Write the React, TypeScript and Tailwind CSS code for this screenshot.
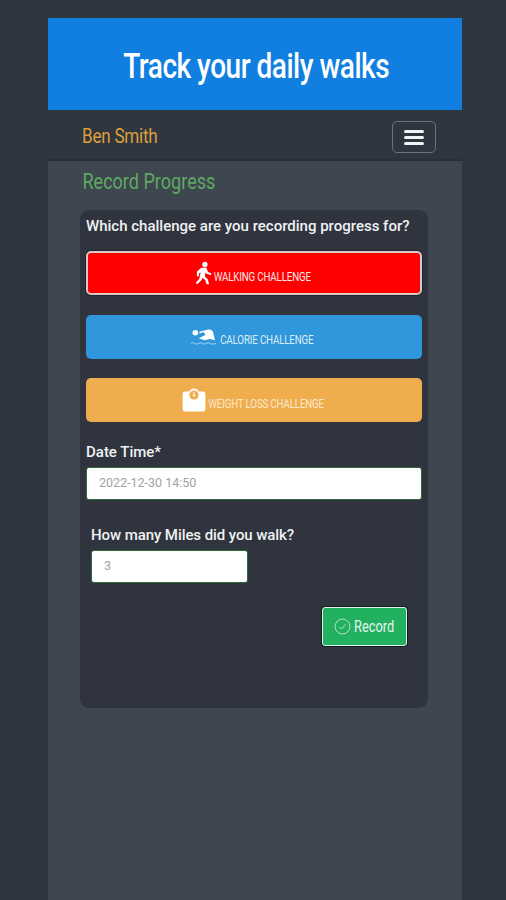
import React from "react";

function WalkIcon() {
  return (
    <svg viewBox="0 0 18 24" className="w-[17px] h-[24px]" fill="white">
      <circle cx="10.500" cy="3" r="2.800" />
      <path d="M6.500 6.500h5.500l1.800 4.400 3.700 1.500-.8 2-4.900-2-.5-1.200-1 4.200 3.200 3.200 1.500 5.400h-2.700l-1.300-4.300-3.200-2.700-.8 2.400L2.400 24 .8 22.300l3.800-4.300L6 11.400l-1.700.9v3.200H2V10.800z" />
    </svg>
  );
}

function SwimIcon() {
  return (
    <svg viewBox="0 0 26 20" className="w-[25px] h-[20px]" fill="white">
      <circle cx="4.500" cy="5.500" r="2.900" />
      <path d="M8.500 4.500 18 2.200Q22 1.800 23 5l2 8.500-5-1.500-6 1.500-6-2.200L15 8l-1.800-3.200-4 1.500z" />
      <path d="M0 16.200c1.300-.9 2.700-.9 4 0s2.700.9 4 0 2.700-.9 4 0 2.700.9 4 0 2.700-.9 4 0 2.700.9 6 0v1c-3.300.9-4.700.9-6 0s-2.700-.9-4 0-2.700.9-4 0-2.700-.9-4 0-2.700.9-4 0-2.700-.9-4 0z" opacity="0.55" />
    </svg>
  );
}

function ScaleIcon() {
  return (
    <svg viewBox="0 0 24 24" className="w-[24px] h-[24px]">
      <path
        fill="white"
        d="M3 3.500h4.200C8.400 1.600 10 .6 12 .6s3.600 1 4.800 2.900H21c1.400 0 2.400 1 2.400 2.400v15.200c0 1.400-1 2.400-2.400 2.400H3c-1.400 0-2.400-1-2.400-2.400V5.900c0-1.400 1-2.400 2.400-2.400z"
      />
      <circle cx="12" cy="7" r="4.600" fill="#f0ad4e" />
      <path d="M11.500 3.600h1v3.900h-1z" fill="white" />
      <circle cx="12" cy="7.600" r="1.100" fill="white" />
    </svg>
  );
}

function ChallengeButton({
  label,
  icon,
  className,
  labelClass,
}: {
  label: string;
  icon: React.ReactNode;
  className: string;
  labelClass: string;
}) {
  return (
    <button
      className={`w-[336px] h-[44px] rounded-[5px] flex items-center justify-center text-[12.500px] tracking-[-0.2px] ${className}`}
    >
      {icon}
      <span className={`translate-y-[4px] scale-x-[0.78] whitespace-nowrap ${labelClass}`}>{label}</span>
    </button>
  );
}

export default function App() {
  return (
    <div className="h-[900px] overflow-hidden bg-[#2f363f] pt-[18px] pl-[48px] font-['Roboto',sans-serif]">
      <div className="w-[414px] h-[882px] bg-[#3e4650]">
        {/* Header */}
        <div className="h-[92px] bg-[#107fdf] flex items-center justify-center">
          <h1 className="text-white text-[35px] leading-[40px] font-medium tracking-[-0.6px] scale-x-[0.8] whitespace-nowrap mt-[5px] ml-[3px]">
            Track your daily walks
          </h1>
        </div>

        {/* Nav */}
        <div className="h-[51px] bg-[#2f363f] border-b-2 border-[#2a3038] flex items-center justify-between pl-[34px] pr-[26px]">
          <span className="text-[#dd9f3c] text-[20px] tracking-[-0.3px] origin-left scale-x-[0.855] whitespace-nowrap mt-[3px]">Ben Smith</span>
          <button className="w-[44px] h-[32px] mt-[5px] rounded-[5px] border border-[#6b727a] flex flex-col items-center justify-center gap-[3px]">
            <span className="w-[20px] h-[3px] bg-[#eef5f5] rounded-sm" />
            <span className="w-[20px] h-[3px] bg-[#eef5f5] rounded-sm" />
            <span className="w-[20px] h-[3px] bg-[#eef5f5] rounded-sm" />
          </button>
        </div>

        {/* Content */}
        <div className="pl-[32px] pt-[9px]">
          <h2 className="pl-[3px] text-[#5fa862] text-[22px] leading-[24px] origin-left scale-x-[0.82] whitespace-nowrap">Record Progress</h2>

          <div className="mt-[16px] w-[348px] h-[498px] bg-[#2f343e] rounded-[9px] pl-[6px] pt-[7px]">
            <p className="text-[#f0f2f2] text-[15px] leading-[18px] font-medium tracking-[0px] whitespace-nowrap">
              Which challenge are you recording progress for?
            </p>

            <div className="mt-[16px] flex flex-col gap-[19.5px]">
              <ChallengeButton
                label="WALKING CHALLENGE"
                icon={<WalkIcon />}
                className="bg-[#ff0000] text-[#fbeaea] border-2 border-[#d8c9c9] ring-1 ring-[#1d2530]"
                labelClass="-mx-[12px]"
              />
              <ChallengeButton
                label="CALORIE CHALLENGE"
                icon={<SwimIcon />}
                className="bg-[#3097dc] text-[#dcecf8]"
                labelClass="-mx-[9px]"
              />
              <ChallengeButton
                label="WEIGHT LOSS CHALLENGE"
                icon={<ScaleIcon />}
                className="bg-[#f0ad4e] text-[#fbe9cd]"
                labelClass="-mx-[14px]"
              />
            </div>

            <label className="block mt-[21px] text-[#f0f2f2] text-[15px] leading-[18px] font-medium">Date Time*</label>
            <div className="mt-[6px] w-[336px] h-[33px] bg-white rounded-[3px] border border-[#2a6b38] flex items-center pl-[12px] text-[#a2a2a2] text-[12.500px]">
              2022-12-30 14:50
            </div>

            <div className="pl-[5px] mt-[26px]">
              <label className="block text-[#f0f2f2] text-[15px] leading-[18px] font-medium tracking-[-0.08px]">How many Miles did you walk?</label>
              <div className="mt-[6px] w-[157px] h-[33px] bg-white rounded-[3px] border border-[#2a6b38] flex items-center pl-[12px] text-[#a2a2a2] text-[12.500px]">
                3
              </div>
            </div>

            <div className="flex justify-end pr-[21px] mt-[24px]">
              <button className="w-[85px] h-[39px] rounded-[3px] bg-[#22b061] border border-[#dff2e6] ring-1 ring-[#161c26] flex items-center justify-center gap-[3px] text-[#e6f5ec] text-[16px]">
                <svg viewBox="0 0 24 24" className="w-[17px] h-[17px]" fill="none" stroke="#bfe8cf" strokeWidth="1.300">
                  <circle cx="12" cy="12" r="10.500" />
                  <path d="m7.500 12.500 3 3 6-6.500" />
                </svg>
                <span className="scale-x-[0.8] -mx-[5px]">Record</span>
              </button>
            </div>
          </div>
        </div>
      </div>
    </div>
  );
}
